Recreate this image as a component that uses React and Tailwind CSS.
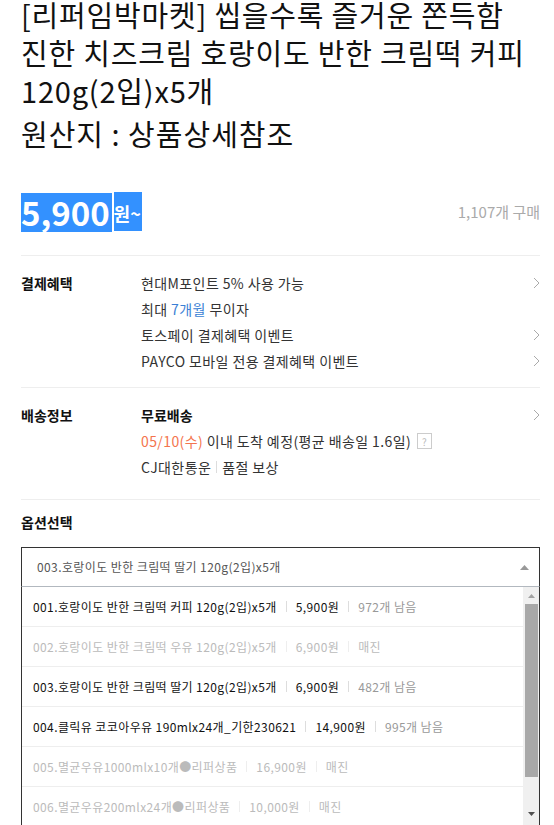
import React from 'react';

const font = "font-['Noto_Sans_CJK_KR',sans-serif]";

const options = [
  { name: '001.호랑이도 반한 크림떡 커피 120g(2입)x5개', price: '5,900원', stock: '972개 남음' },
  { name: '002.호랑이도 반한 크림떡 우유 120g(2입)x5개', price: '6,900원', stock: '매진', soldOut: true },
  { name: '003.호랑이도 반한 크림떡 딸기 120g(2입)x5개', price: '6,900원', stock: '482개 남음' },
  { name: '004.클릭유 코코아우유 190mlx24개_기한230621', price: '14,900원', stock: '995개 남음' },
  { name: '005.멸균우유1000mlx10개●리퍼상품', price: '16,900원', stock: '매진', soldOut: true },
  { name: '006.멸균우유200mlx24개●리퍼상품', price: '10,000원', stock: '매진', soldOut: true },
];

const Chevron = () => (
  <svg width="7" height="12" viewBox="0 0 7 12" className="shrink-0">
    <polyline points="1,1 6,6 1,11" fill="none" stroke="#aaa" strokeWidth="1" />
  </svg>
);

const Row = ({ children, arrow }) => (
  <div className="flex items-center justify-between h-[26px]">
    <div className="flex items-center">{children}</div>
    {arrow && <Chevron />}
  </div>
);

const Bar = ({ light }) => (
  <span className={`mx-[9px] inline-block w-px h-[11px] ${light ? 'bg-[#eee]' : 'bg-[#ddd]'}`} />
);

const App = () => {
  return (
    <div className={`${font} h-[825px] overflow-hidden bg-white pl-[21px] pr-[14px] text-[#111]`}>
      {/* title */}
      <h1 className="mt-[-5px] break-keep text-[29px] leading-[38px] tracking-[0.8px] font-normal">
        [리퍼임박마켓] 씹을수록 즐거운 쫀득함 진한 치즈크림 호랑이도 반한 크림떡 커피 120g(2입)x5개
      </h1>
      <p className="mt-[5px] text-[29px] leading-[38px] tracking-[1px]">원산지 : 상품상세참조</p>

      {/* price */}
      <div className="mt-[41px] flex items-center justify-between">
        <div className="flex items-start">
          <span className="h-[39px] bg-[#3391ff] text-white font-bold text-[33px] leading-[39px] pr-[2px]">5,900</span>
          <span className="ml-[2px] mt-[-1px] h-[39px] bg-[#3391ff] text-white font-bold text-[18px] leading-[42px] pr-[1px]">원~</span>
        </div>
        <span className="text-[15px] text-[#aaa]">1,107개 구매</span>
      </div>

      <div className="mt-[23px] border-t border-[#eee]" />

      {/* payment benefits */}
      <div className="flex pt-[14px] pb-[13px] border-b border-[#eee] text-[14px] tracking-[0.4px]">
        <div className="w-[120px] h-[26px] leading-[26px] font-bold tracking-normal">결제혜택</div>
        <div className="flex-1 text-[#333]">
          <Row arrow>현대M포인트 5% 사용 가능</Row>
          <Row>최대&nbsp;<span className="text-[#3a7fd5]">7개월</span>&nbsp;무이자</Row>
          <Row arrow>토스페이 결제혜택 이벤트</Row>
          <Row arrow>PAYCO 모바일 전용 결제혜택 이벤트</Row>
        </div>
      </div>

      {/* delivery */}
      <div className="flex pt-[14px] pb-[19px] border-b border-[#eee] text-[14px] tracking-[0.4px]">
        <div className="w-[120px] h-[26px] leading-[26px] font-bold tracking-normal">배송정보</div>
        <div className="flex-1 text-[#333]">
          <Row arrow><span className="font-bold text-[#111] tracking-normal">무료배송</span></Row>
          <Row>
            <span className="text-[#f4744d]">05/10(수)</span>&nbsp;이내 도착 예정(평균 배송일 1.6일)
            <span className="ml-[6px] inline-flex h-[16px] w-[15px] items-center justify-center border border-[#ccc] text-[10px] text-[#bbb]">?</span>
          </Row>
          <Row>
            CJ대한통운
            <span className="mx-[5px] inline-block w-px h-[12px] bg-[#ddd]" />
            품절 보상
          </Row>
        </div>
      </div>

      {/* options */}
      <div className="pt-[9px] text-[14px] font-bold leading-[26px]">옵션선택</div>

      <div className="mt-[12px] flex h-[40px] items-center justify-between border-x border-t border-[#333] border-b border-b-[#b2b8bf] pl-[15px] pr-[10px]">
        <span className="text-[12px] text-[#555] tracking-[0.4px]">003.호랑이도 반한 크림떡 딸기 120g(2입)x5개</span>
        <svg width="9" height="5" viewBox="0 0 9 5"><polygon points="0,5 4.5,0 9,5" fill="#999" /></svg>
      </div>

      <div className="flex h-[240px] border-x border-[#333]">
        <div className="flex-1 overflow-hidden">
          {options.map((o) => (
            <div key={o.name} className={`flex h-[40px] items-center border-b border-[#eee] pl-[11px] text-[12px] tracking-[0.4px] ${o.soldOut ? 'text-[#bbb]' : 'text-[#111]'}`}>
              <span>{o.name}</span>
              <Bar light={o.soldOut} />
              <span>{o.price}</span>
              <Bar light={o.soldOut} />
              <span className={o.soldOut ? 'text-[#bbb]' : 'text-[#999]'}>{o.stock}</span>
            </div>
          ))}
        </div>
        <div className="flex w-[16px] flex-col bg-[#f0f0f0]">
          <div className="flex h-[17px] items-center justify-center">
            <svg width="7" height="4" viewBox="0 0 7 4"><polygon points="0,4 3.5,0 7,4" fill="#a3a3a3" /></svg>
          </div>
          <div className="ml-[2px] h-[173px] w-[13px] bg-[#a8a8a8]" />
          <div className="flex-1" />
          <div className="flex h-[25px] items-start justify-center pt-[10px]">
            <svg width="7" height="4" viewBox="0 0 7 4"><polygon points="0,0 3.5,4 7,0" fill="#505050" /></svg>
          </div>
        </div>
      </div>
    </div>
  );
};

export default App;
